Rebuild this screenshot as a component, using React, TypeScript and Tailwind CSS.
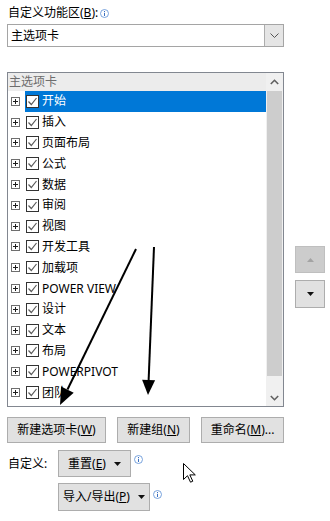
import React from 'react';

const font = { fontFamily: '"Noto Sans", "Noto Sans CJK SC", sans-serif' };

const tabs: { label: string; selected?: boolean }[] = [
  { label: '开始', selected: true },
  { label: '插入' },
  { label: '页面布局' },
  { label: '公式' },
  { label: '数据' },
  { label: '审阅' },
  { label: '视图' },
  { label: '开发工具' },
  { label: '加载项' },
  { label: 'POWER VIEW' },
  { label: '设计' },
  { label: '文本' },
  { label: '布局' },
  { label: 'POWERPIVOT' },
  { label: '团队' },
  { label: '开发' },
];

const InfoIcon = () => (
  <svg width="9" height="9" viewBox="0 0 9 9" className="shrink-0">
    <circle cx="4.5" cy="4.5" r="4" fill="white" stroke="#6a98d8" strokeWidth="0.9" />
    <rect x="4" y="2" width="1" height="1" fill="#3a6fc0" />
    <rect x="4" y="3.8" width="1" height="3.2" fill="#3a6fc0" />
  </svg>
);

const Expander = () => (
  <svg width="9" height="9" viewBox="0 0 9 9" className="shrink-0">
    <rect x="0.5" y="0.5" width="8" height="8" fill="white" stroke="#6e6e6e" />
    <path d="M2 4.5h5M4.5 2v5" stroke="#1e1e1e" strokeWidth="1" />
  </svg>
);

const Check = () => (
  <svg width="13" height="13" viewBox="0 0 13 13" className="shrink-0">
    <rect x="0.5" y="0.5" width="12" height="12" fill="white" stroke="#333333" />
    <path d="M2.5 6.5l2.8 3 5.2-6.5" fill="none" stroke="#5a5a5a" strokeWidth="1.2" />
  </svg>
);

const Caret = () => (
  <svg width="7" height="4" viewBox="0 0 7 4">
    <path d="M0 0h7L3.5 4z" fill="#111" />
  </svg>
);

const Btn = ({ children, className = '' }: { children: React.ReactNode; className?: string }) => (
  <div
    className={`flex items-center justify-center bg-[#e1e1e1] border border-[#adadad] text-[12px] text-black leading-none ${className}`}
  >
    {children}
  </div>
);

const App: React.FC = () => {
  return (
    <div className="relative w-[330px] h-[521px] bg-white overflow-hidden text-[12px] text-black" style={font}>
      <div className="pl-[7px]">
        {/* title */}
        <div className="flex items-center gap-[2px] pl-[1px] pt-[4px] h-[22px] leading-none">
          <span>
            自定义功能区(<span className="underline">B</span>):
          </span>
          <InfoIcon />
        </div>

        {/* combo */}
        <div className="mt-[2px] flex w-[277px] h-[23px] border border-[#a5a5a5]">
          <div className="flex-1 flex items-center pl-[3px] leading-none">主选项卡</div>
          <div className="w-[19px] bg-[#e5e5e5] border-l border-[#adadad] flex items-center justify-center">
            <svg width="9" height="5" viewBox="0 0 9 5">
              <path d="M0.5 0.5l4 4 4-4" fill="none" stroke="#555" strokeWidth="1" />
            </svg>
          </div>
        </div>

        <div className="mt-[25px] flex">
          {/* list */}
          <div className="w-[277px] h-[335px] border border-[#828790] flex overflow-hidden">
            <div className="flex-1 overflow-hidden">
              <div className="h-[18px] bg-[#ececec] text-[#6d6d6d] flex items-center pl-[1px] leading-none">
                主选项卡
              </div>
              {tabs.map((t) => (
                <div key={t.label} className="h-[20.8px] flex items-center">
                  <div className="w-[17px] flex justify-end pr-[5px]">
                    <Expander />
                  </div>
                  <div
                    className={`flex-1 h-full flex items-center gap-[3px] pl-[1px] leading-none ${
                      t.selected ? 'bg-[#0078d7] text-white' : ''
                    }`}
                  >
                    <Check />
                    <span>{t.label}</span>
                  </div>
                </div>
              ))}
            </div>
            {/* scrollbar */}
            <div className="w-[17px] bg-[#f0f0f0] flex flex-col">
              <div className="h-[18px] flex items-center justify-center">
                <svg width="9" height="6" viewBox="0 0 9 6">
                  <path d="M0.8 5L4.5 1.3 8.2 5" fill="none" stroke="#606060" strokeWidth="1.6" />
                </svg>
              </div>
              <div className="h-[285px] mx-[1px] bg-[#cdcdcd]" />
              <div className="flex-1" />
              <div className="h-[17px] flex items-center justify-center">
                <svg width="9" height="6" viewBox="0 0 9 6">
                  <path d="M0.8 1L4.5 4.7 8.2 1" fill="none" stroke="#606060" strokeWidth="1.6" />
                </svg>
              </div>
            </div>
          </div>

          {/* move up / down */}
          <div className="ml-[11px] mt-[174px] flex flex-col gap-[7px]">
            <div className="w-[30px] h-[27px] bg-[#cccccc] border border-[#bfbfbf] flex items-center justify-center">
              <svg width="7" height="4" viewBox="0 0 7 4">
                <path d="M0 4h7L3.5 0z" fill="#a3a3a3" />
              </svg>
            </div>
            <div className="w-[30px] h-[28px] bg-[#e1e1e1] border border-[#adadad] flex items-center justify-center">
              <Caret />
            </div>
          </div>
        </div>

        {/* bottom buttons */}
        <div className="mt-[10px] flex gap-[11px] h-[26px]">
          <Btn className="w-[99px]">
            新建选项卡(<span className="underline">W</span>)
          </Btn>
          <Btn className="w-[73px]">
            新建组(<span className="underline">N</span>)
          </Btn>
          <Btn className="w-[83px]">
            重命名(<span className="underline">M</span>)...
          </Btn>
        </div>

        <div className="mt-[7px] flex items-start h-[27px]">
          <span className="w-[51px] pl-[1px] pt-[8px] leading-none">自定义:</span>
          <Btn className="w-[73px] h-[27px] gap-[8px]">
            <span>
              重置(<span className="underline">E</span>)
            </span>
            <Caret />
          </Btn>
          <div className="ml-[3px] mt-[5px]">
            <InfoIcon />
          </div>
        </div>

        <div className="mt-[6px] flex items-start h-[28px] pl-[51px]">
          <Btn className="w-[92px] h-[28px] gap-[8px]">
            <span>
              导入/导出(<span className="underline">P</span>)
            </span>
            <Caret />
          </Btn>
          <div className="ml-[3px] mt-[7px]">
            <InfoIcon />
          </div>
        </div>
      </div>

      {/* annotation arrows and mouse pointer */}
      <svg className="absolute inset-0 pointer-events-none" width="330" height="521" viewBox="0 0 330 521">
        <line x1="136" y1="249" x2="67.5" y2="389.5" stroke="#000" strokeWidth="2" />
        <polygon points="60,405 73.7,392.8 61.1,386.6" fill="#000" />
        <line x1="154" y1="247" x2="148.6" y2="381" stroke="#000" strokeWidth="2" />
        <polygon points="148,395 155.1,380.3 142.1,379.7" fill="#000" />
        <path
          d="M183.5 463.5v16l4-3.8 3 6.5 2.3-1-3-6.3h5.5z"
          fill="#fff"
          stroke="#000"
          strokeWidth="1"
          strokeLinejoin="miter"
        />
      </svg>
    </div>
  );
};

export default App;
